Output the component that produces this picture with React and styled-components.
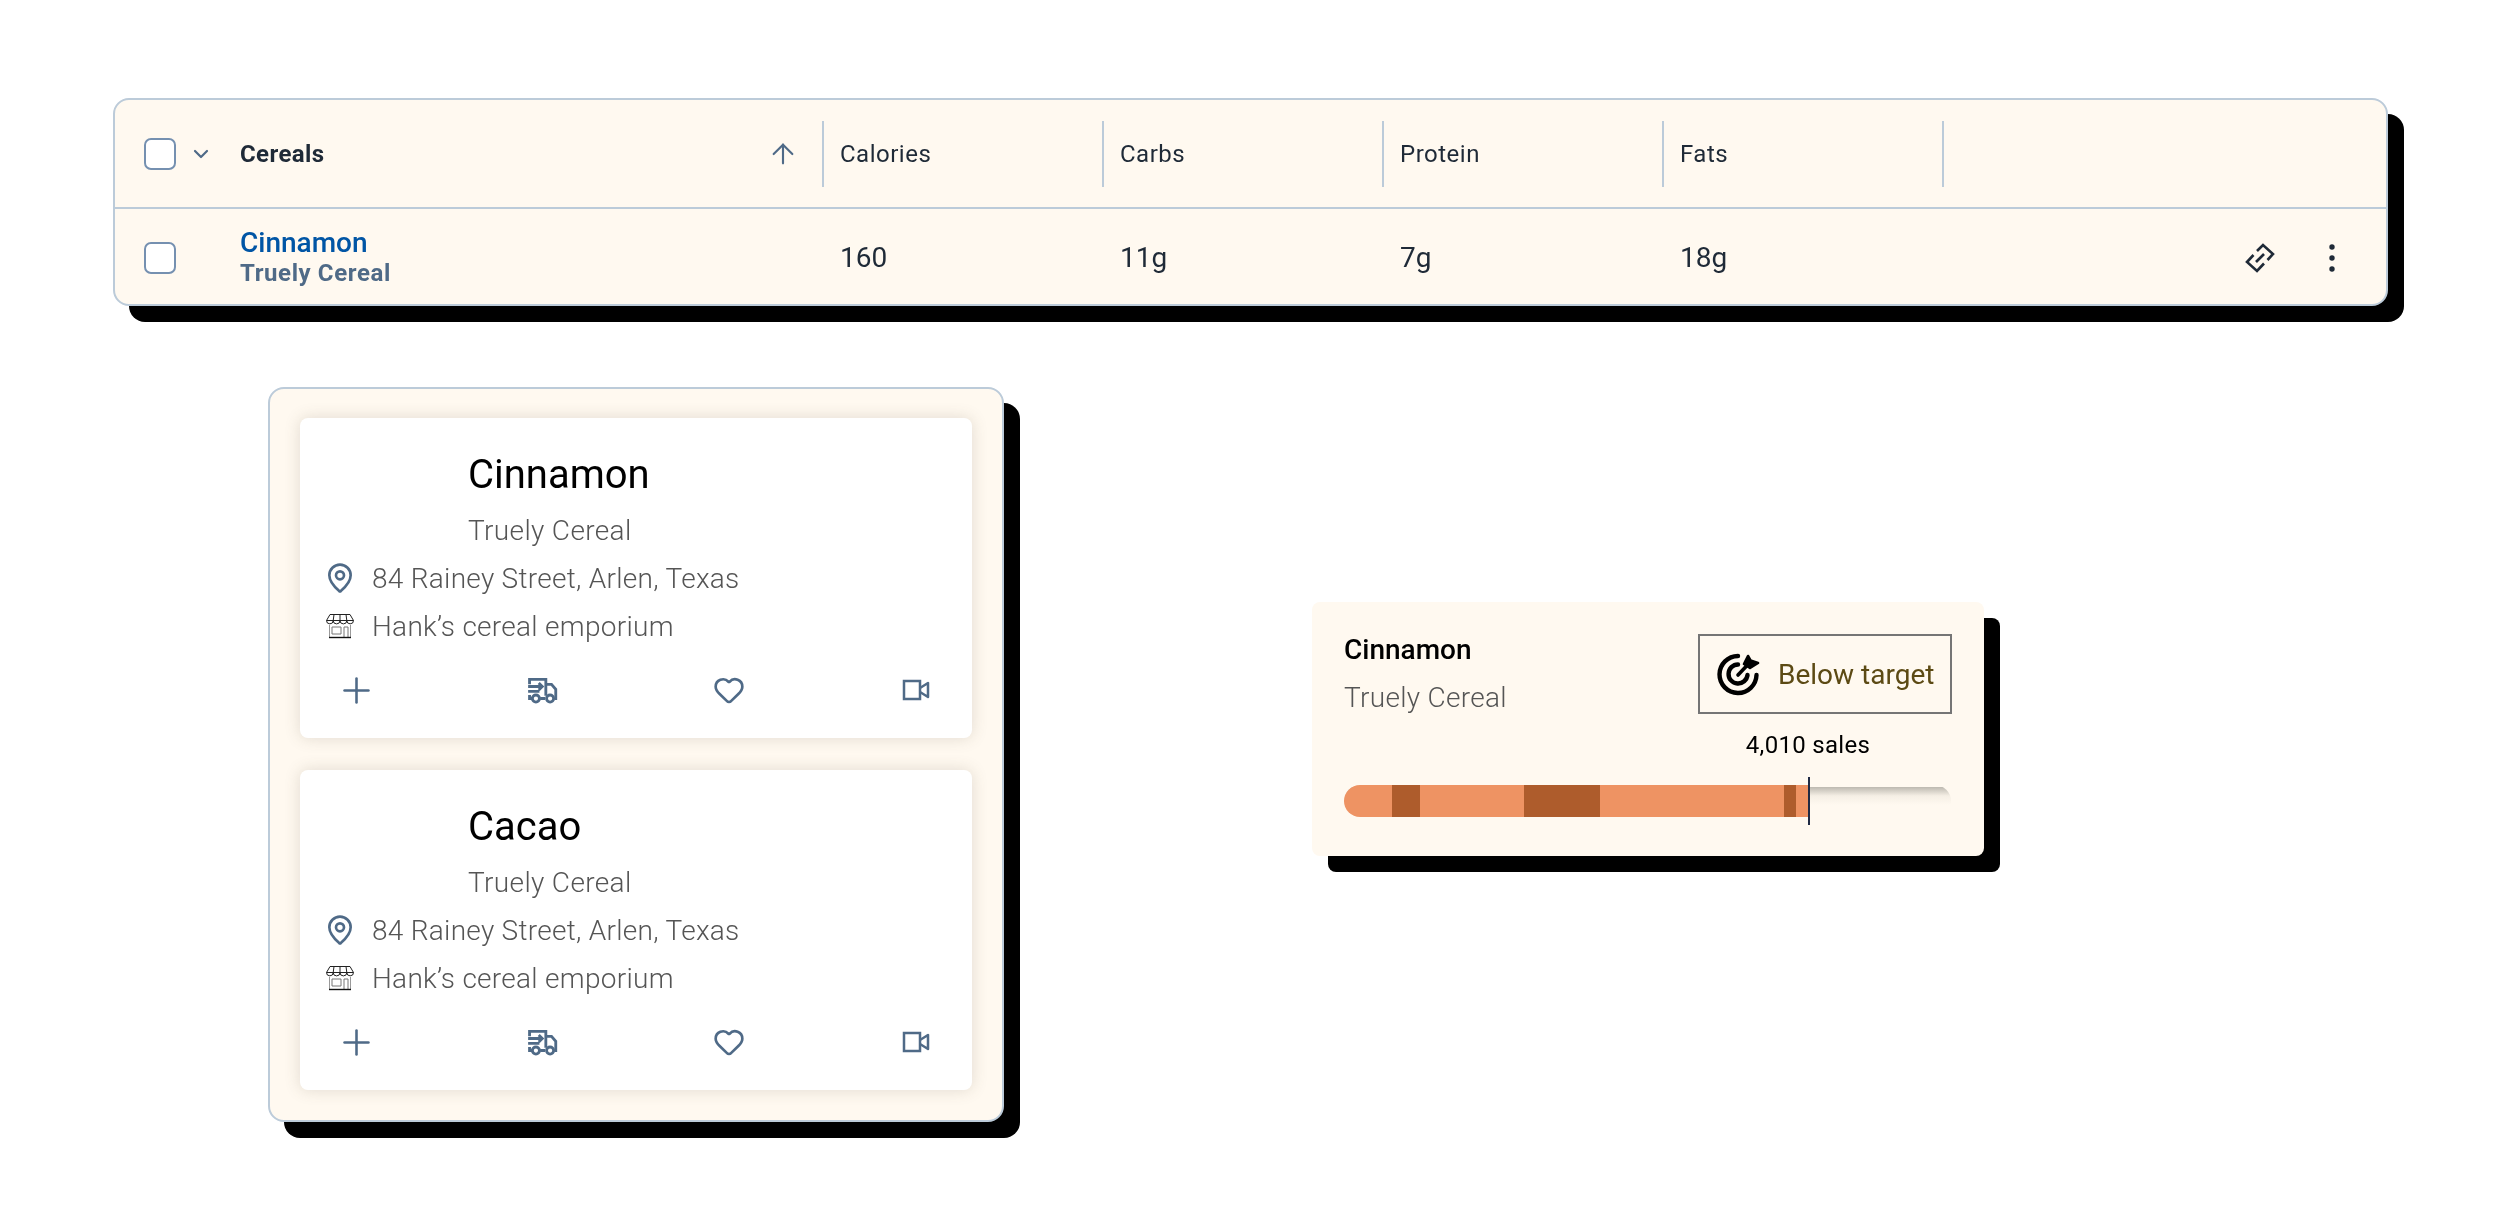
import React from 'react'
import styled, { createGlobalStyle } from 'styled-components'
import { ArrowUp, ChevronDown, Heart, MapPin, Plus } from 'lucide-react'

const GlobalStyle = createGlobalStyle`
  body {
    margin: 0;
    background: #fff;
    font-family: Roboto, "Liberation Sans", sans-serif;
  }
`

const SLATE = '#4f6a87'
const CREAM = '#fff9f0'

const LinkIcon = () => (
  <svg width="32" height="32" viewBox="0 0 32 32" fill="none" stroke="#1f2a37" strokeWidth="2.6">
    <path d="M13 9l6-6 10 9-5.500 6" />
    <path d="M9.500 13l-6.500 7 10 9 7-7.500" />
    <path d="M12 20l8-8" />
  </svg>
)

const MoreIcon = () => (
  <svg width="8" height="28" viewBox="0 0 8 28" fill="#1f2a37">
    <circle cx="4" cy="3" r="2.700" />
    <circle cx="4" cy="14" r="2.700" />
    <circle cx="4" cy="25" r="2.700" />
  </svg>
)

const TruckIcon = () => (
  <svg width="34" height="34" viewBox="0 0 24 24" fill="none" stroke={SLATE} strokeWidth="2">
    <path d="M2.500 8V4.500H14V16" />
    <path d="M1.500 9.500h10M9 7l2.500 2.500L9 12M1.500 13h8" />
    <path d="M2.500 15.500V18H4.500M10 18h3.500M14 8h4l3 3.500V18h-1" />
    <circle cx="7" cy="18" r="2.500" />
    <circle cx="17" cy="18" r="2.500" />
  </svg>
)

const VideoIcon = () => (
  <svg width="32" height="32" viewBox="0 0 32 32" fill="none" stroke={SLATE} strokeWidth="2.500">
    <path d="M4 7h16v18H4z" />
    <path d="M20 14l8-5v14l-8-5" strokeLinejoin="round" />
  </svg>
)

const StoreIcon = () => (
  <svg width="28" height="26" viewBox="0 0 28 26" fill="none" strokeWidth="1">
    <path d="M4 1.500h20l3.500 6h-27z" stroke="#222" />
    <path d="M.500 7.500a3.300 3.300 0 0 0 6.700 0 3.300 3.300 0 0 0 6.800 0 3.300 3.300 0 0 0 6.800 0 3.300 3.300 0 0 0 6.700 0" stroke="#222" />
    <path d="M8 1.500L7.200 7.500M14 1.500v6M20 1.500l.8 6" stroke="#222" />
    <path d="M3.500 12v12.500M24.500 12v12.500" stroke="#999" />
    <path d="M6 14h9v7H6zM18 24.500V14h4v10.500" stroke="#777" />
    <path d="M3 24.500h22" stroke="#111" strokeWidth="1.400" />
  </svg>
)

const TargetIcon = () => (
  <svg width="44" height="44" viewBox="0 0 44 44" fill="none" stroke="#000" strokeWidth="4.400" strokeLinecap="round">
    <path d="M21 4A18.500 18.500 0 1 0 39.500 23" />
    <path d="M21 12.500A9.500 9.500 0 1 0 30.500 23" />
    <path d="M21 23L30 13.500" strokeWidth="3.600" />
    <path d="M27 12l4-8 2.500 4.500L41 11l-8 5z" fill="#000" strokeLinejoin="round" strokeWidth="2.600" />
  </svg>
)

const Checkbox = () => <CheckBoxMark />

const columns = ['Calories', 'Carbs', 'Protein', 'Fats']
const values = ['160', '11g', '7g', '18g']
const cards = ['Cinnamon', 'Cacao']
const bands = [
  { left: 48, width: 28 },
  { left: 180, width: 76 },
  { left: 440, width: 12 },
]

const ProductCard = ({ name }) => (
  <Card>
    <CardTitle>{name}</CardTitle>
    <CardBrand>Truely Cereal</CardBrand>
    <InfoRow>
      <InfoIcon><MapPin size={32} color={SLATE} strokeWidth={2} /></InfoIcon>
      84 Rainey Street, Arlen, Texas
    </InfoRow>
    <InfoRow>
      <InfoIcon><StoreIcon /></InfoIcon>
      Hank’s cereal emporium
    </InfoRow>
    <CardActions>
      <ActionButton><Plus size={41} color={SLATE} strokeWidth={1.500} /></ActionButton>
      <ActionButton><TruckIcon /></ActionButton>
      <ActionButton><Heart size={32} color={SLATE} strokeWidth={2} /></ActionButton>
      <ActionButton><VideoIcon /></ActionButton>
    </CardActions>
  </Card>
)

const App = () => (
  <Page>
    <GlobalStyle />
    <Table>
      <HeaderRow>
        <HeaderName>
          <SelectBox>
            <Checkbox />
            <ChevronDown size={24} color={SLATE} strokeWidth={2.200} />
          </SelectBox>
          <HeaderTitle>Cereals</HeaderTitle>
          <SortIcon><ArrowUp size={32} color={SLATE} strokeWidth={1.600} /></SortIcon>
        </HeaderName>
        {columns.map((c) => <HeaderCell key={c}>{c}</HeaderCell>)}
      </HeaderRow>
      <BodyRow>
        <NameCell>
          <Checkbox />
          <NameText>
            <RowName>Cinnamon</RowName>
            <RowBrand>Truely Cereal</RowBrand>
          </NameText>
        </NameCell>
        {values.map((v, i) => <ValueCell key={i}>{v}</ValueCell>)}
        <RowActions>
          <LinkIcon />
          <MoreIcon />
        </RowActions>
      </BodyRow>
    </Table>

    <LowerRow>
      <Panel>
        {cards.map((c) => <ProductCard key={c} name={c} />)}
      </Panel>
      <SalesCard>
        <SalesTop>
          <div>
            <SalesName>Cinnamon</SalesName>
            <SalesBrand>Truely Cereal</SalesBrand>
          </div>
          <Badge>
            <TargetIcon />
            <BadgeText>Below target</BadgeText>
          </Badge>
        </SalesTop>
        <SalesLabel $at={464}>4,010 sales</SalesLabel>
        <Meter>
          <MeterFill $width={465}>
            {bands.map((b) => <MeterBand key={b.left} $left={b.left} $width={b.width} />)}
          </MeterFill>
          <MeterMark $at={465} />
        </Meter>
      </SalesCard>
    </LowerRow>
  </Page>
)

const Page = styled.div`
  width: 2500px;
  height: 1220px;
  box-sizing: border-box;
  padding: 98px 0 0 113px;
  overflow: hidden;
  will-change: transform;
`
const Table = styled.div`
  width: 2275px;
  height: 208px;
  box-sizing: border-box;
  background: ${CREAM};
  border: 2px solid #bccbd9;
  border-radius: 16px;
  box-shadow: 16px 16px 0 #000;
`
const TableGrid = `
  display: grid;
  grid-template-columns: 709px repeat(4, 280px) 1fr;
  align-items: center;
`
const HeaderRow = styled.div`
  ${TableGrid}
  height: 109px;
  box-sizing: border-box;
  border-bottom: 2px solid #bccbd9;
`
const HeaderName = styled.div`
  display: flex;
  align-items: center;
  height: 66px;
  padding-left: 29px;
  padding-right: 16px;
  border-right: 2px solid #bccbd9;
`
const SelectBox = styled.div`
  display: flex;
  align-items: center;
  gap: 13px;
  width: 96px;
`
const CheckBoxMark = styled.div`
  width: 32px;
  height: 32px;
  box-sizing: border-box;
  flex: none;
  background: #fff;
  border: 2px solid #7590b0;
  border-radius: 7px;
`
const HeaderTitle = styled.div`
  flex: 1;
  font-size: 24px;
  font-weight: 700;
  letter-spacing: 0.4px;
  color: #1f2a37;
`
const SortIcon = styled.div`
  display: flex;
  margin-right: 7px;
`
const HeaderCell = styled.div`
  height: 66px;
  box-sizing: border-box;
  padding-left: 16px;
  border-right: 2px solid #bccbd9;
  font-size: 24px;
  line-height: 67px;
  letter-spacing: 0.5px;
  color: #1f2a37;
`
const BodyRow = styled.div`
  ${TableGrid}
  height: 97px;
`
const NameCell = styled.div`
  display: flex;
  align-items: center;
  padding-left: 29px;
`
const NameText = styled.div`
  margin-left: 64px;
  margin-top: -1px;
`
const RowName = styled.div`
  font-size: 28px;
  line-height: 32px;
  font-weight: 500;
  color: #0055a5;
`
const RowBrand = styled.div`
  font-size: 24px;
  line-height: 28px;
  font-weight: 700;
  letter-spacing: 0.6px;
  color: #4f6a87;
`
const ValueCell = styled.div`
  padding-left: 16px;
  font-size: 28px;
  color: #1f2a37;
`
const RowActions = styled.div`
  display: flex;
  align-items: center;
  justify-content: flex-end;
  gap: 52px;
  padding-right: 50px;
`
const LowerRow = styled.div`
  display: flex;
  align-items: flex-start;
  margin: 81px 0 0 155px;
`
const Panel = styled.div`
  display: flex;
  flex-direction: column;
  gap: 32px;
  width: 736px;
  height: 735px;
  box-sizing: border-box;
  padding: 29px 30px;
  background: ${CREAM};
  border: 2px solid #bccbd9;
  border-radius: 16px;
  box-shadow: 16px 16px 0 #000;
`
const Card = styled.div`
  height: 320px;
  box-sizing: border-box;
  padding-top: 34px;
  background: #fff;
  border-radius: 8px;
  box-shadow: 0 0 16px rgba(90, 80, 60, 0.18);
`
const CardTitle = styled.div`
  margin-left: 168px;
  font-size: 40px;
  line-height: 46px;
  color: #000;
`
const CardBrand = styled.div`
  margin: 13px 0 3px 168px;
  font-size: 28px;
  line-height: 40px;
  font-weight: 300;
  letter-spacing: 0.35px;
  color: #555;
`
const InfoRow = styled.div`
  display: flex;
  align-items: center;
  height: 48px;
  padding-left: 24px;
  font-size: 28px;
  font-weight: 300;
  letter-spacing: 0.28px;
  color: #555;
`
const InfoIcon = styled.div`
  display: flex;
  justify-content: center;
  width: 32px;
  margin-right: 16px;
`
const CardActions = styled.div`
  display: flex;
  justify-content: space-between;
  margin-top: 12px;
  padding: 0 28px;
`
const ActionButton = styled.div`
  display: flex;
  align-items: center;
  justify-content: center;
  width: 56px;
  height: 56px;
`
const SalesCard = styled.div`
  width: 672px;
  height: 254px;
  box-sizing: border-box;
  margin: 215px 0 0 308px;
  padding: 32px;
  background: ${CREAM};
  border-radius: 8px;
  box-shadow: 16px 16px 0 #000;
`
const SalesTop = styled.div`
  display: flex;
  justify-content: space-between;
  align-items: flex-start;
  height: 80px;
`
const SalesName = styled.div`
  font-size: 28px;
  line-height: 32px;
  font-weight: 500;
  color: #000;
`
const SalesBrand = styled.div`
  margin-top: 12px;
  font-size: 28px;
  line-height: 40px;
  font-weight: 300;
  letter-spacing: 0.3px;
  color: #555;
`
const Badge = styled.div`
  display: flex;
  align-items: center;
  gap: 17px;
  width: 254px;
  height: 80px;
  box-sizing: border-box;
  padding-left: 17px;
  border: 2px solid #757575;
`
const BadgeText = styled.div`
  font-size: 28px;
  color: #5c4a14;
`
const SalesLabel = styled.div`
  width: fit-content;
  margin: 15px 0 0 ${(p) => p.$at}px;
  transform: translateX(-50%);
  font-size: 24px;
  line-height: 32px;
  letter-spacing: 0.3px;
  white-space: nowrap;
  color: #000;
`
const Meter = styled.div`
  position: relative;
  width: 607px;
  height: 32px;
  margin-top: 24px;
  border-radius: 16px;
  background: linear-gradient(${CREAM} 2px, #bdb9b0 2px, #f5efe5 34%, ${CREAM} 62%);
`
const MeterFill = styled.div`
  position: absolute;
  top: 0;
  left: 0;
  bottom: 0;
  width: ${(p) => p.$width}px;
  background: #ee9363;
  border-radius: 16px 0 0 16px;
`
const MeterBand = styled.div`
  position: absolute;
  top: 0;
  bottom: 0;
  left: ${(p) => p.$left}px;
  width: ${(p) => p.$width}px;
  background: #ae5c2c;
`
const MeterMark = styled.div`
  position: absolute;
  top: -8px;
  bottom: -8px;
  left: ${(p) => p.$at - 1}px;
  width: 2px;
  background: #1f2a44;
`

export default App
